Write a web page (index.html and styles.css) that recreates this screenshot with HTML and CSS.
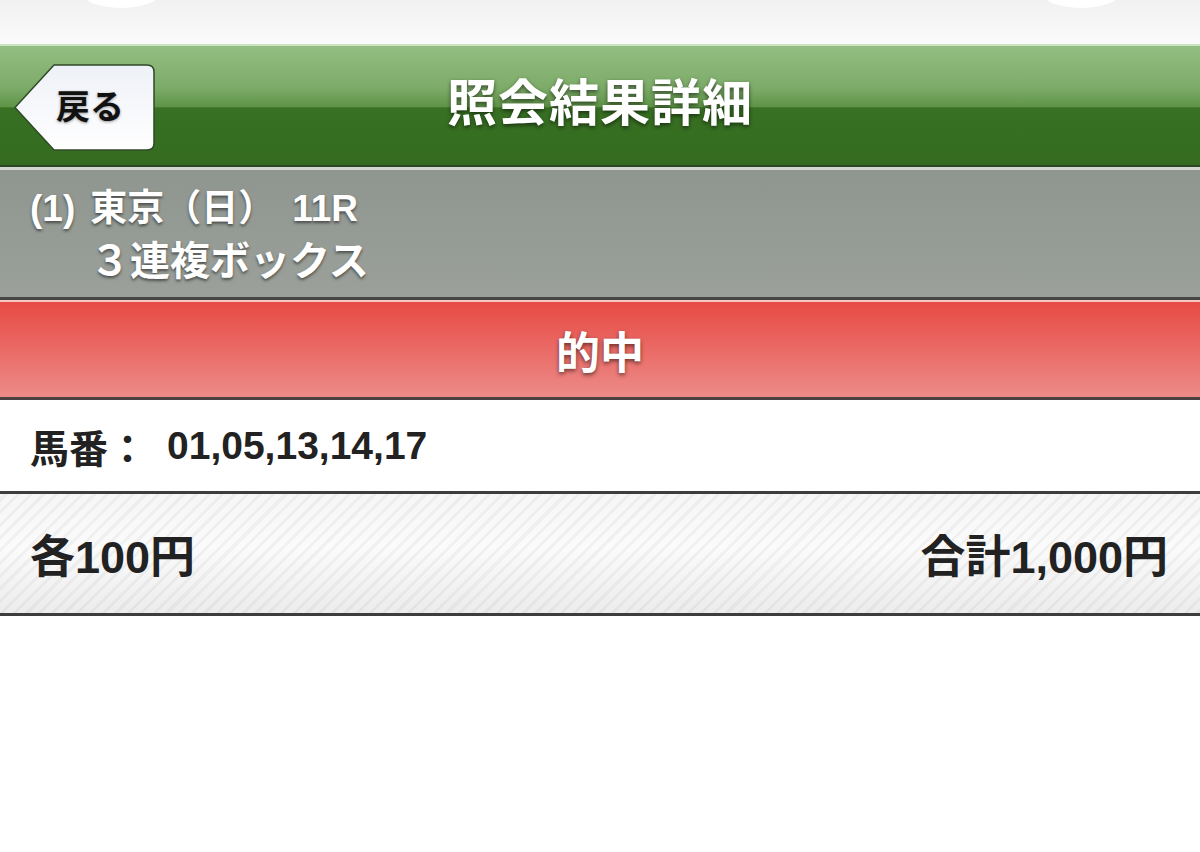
FILE: index.html
```html
<!DOCTYPE html>
<html lang="ja">
<head>
<meta charset="utf-8">
<title>照会結果詳細</title>
<link rel="stylesheet" href="styles.css">
</head>
<body>
<div class="page">
  <div class="statusbar">
    <span class="blob blob-left"></span>
    <span class="blob blob-right"></span>
  </div>
  <header class="navbar">
    <div class="nav-left">
      <a class="back" href="#">
        <svg class="back-shape" width="141" height="87" viewBox="0 0 141 87" aria-hidden="true">
          <defs>
            <linearGradient id="bg" x1="0" y1="0" x2="0" y2="1">
              <stop offset="0" stop-color="#eef1f7"/>
              <stop offset="0.5" stop-color="#f7f8fb"/>
              <stop offset="1" stop-color="#ffffff"/>
            </linearGradient>
          </defs>
          <path d="M40 1 H133 Q140 1 140 8 V79 Q140 86 133 86 H40 L1 43.5 Z" fill="url(#bg)" stroke="#2f4a27" stroke-width="1.5"/>
        </svg>
        <span class="back-label">戻る</span>
      </a>
    </div>
    <h1 class="title">照会結果詳細</h1>
    <div class="nav-right"></div>
  </header>
  <section class="race">
    <div class="race-line"><span>(1)</span><span class="venue">東京（日）</span><span class="rno">11R</span></div>
    <div class="race-line race-type">３連複ボックス</div>
  </section>
  <section class="result">的中</section>
  <section class="horses">
    <span class="horses-label">馬番：</span>
    <span class="horses-nums">01,05,13,14,17</span>
  </section>
  <section class="amounts">
    <span>各100円</span>
    <span>合計1,000円</span>
  </section>
</div>
</body>
</html>
```
FILE: styles.css
```css
* { box-sizing: border-box; }
html, body { margin: 0; padding: 0; background: #ffffff; }
body {
  font-family: "Liberation Sans", "Noto Sans CJK JP", sans-serif;
  font-weight: bold;
  width: 1200px;
  height: 852px;
  overflow: hidden;
}
.page { width: 1200px; }

.statusbar {
  position: relative;
  height: 44px;
  background: linear-gradient(#f1f1f1, #fbfbfb);
  overflow: hidden;
}
.blob {
  position: absolute;
  top: -22px;
  width: 78px;
  height: 30px;
  border-radius: 50%;
  background: #ffffff;
}
.blob-left { left: 82px; }
.blob-right { left: 1042px; }

.navbar {
  display: grid;
  grid-template-columns: 1fr auto 1fr;
  align-items: center;
  height: 123px;
  border-top: 2px solid #cbe4c0;
  border-bottom: 2px solid #2b4724;
  background: linear-gradient(#94be83 0%, #7dac69 35%, #5f9447 51%, #387123 52%, #346b20 100%);
}
.nav-left { padding-left: 14px; padding-top: 4px; }
.back {
  position: relative;
  display: block;
  width: 141px;
  height: 87px;
  text-decoration: none;
}
.back-shape { position: absolute; left: 0; top: 0; }
.back-label {
  position: absolute;
  left: 20px;
  top: 0;
  width: 112px;
  height: 80px;
  display: flex;
  align-items: center;
  justify-content: center;
  font-size: 34px;
  color: #111111;
  text-shadow: 0 1px 3px rgba(0,0,0,0.4);
}
.title {
  margin: 0;
  padding-bottom: 14px;
  font-size: 50px;
  font-weight: bold;
  color: #ffffff;
  letter-spacing: 1px;
  text-shadow: 0 2px 4px rgba(0,0,0,0.55);
}

.race {
  border-top: 3px solid #d3d6d2;
  border-bottom: 3px solid #454745;
  background: linear-gradient(#8f958f, #9ba09a);
  padding: 13px 0 10px 30px;
  color: #ffffff;
  font-size: 37px;
  text-shadow: 0 2px 3px rgba(0,0,0,0.5);
}
.race-line { line-height: 52px; height: 52px; white-space: nowrap; }
.venue { margin-left: 15px; }
.rno { margin-left: 17px; }
.race-type { padding-left: 60px; font-size: 40px; }

.result {
  height: 100px;
  border-top: 2px solid #f6c4c1;
  border-bottom: 3px solid #4a4240;
  background: linear-gradient(#e84a44, #ec8b88);
  display: flex;
  align-items: center;
  justify-content: center;
  color: #ffffff;
  font-size: 44px;
  text-shadow: 0 2px 4px rgba(0,0,0,0.55);
}

.horses {
  height: 94px;
  border-bottom: 3px solid #3d3d3d;
  display: flex;
  align-items: center;
  padding-left: 30px;
  font-size: 39px;
  color: #222222;
}
.horses-label { margin-right: 20px; }

.amounts {
  height: 122px;
  border-bottom: 3px solid #3d3d3d;
  display: flex;
  align-items: center;
  justify-content: space-between;
  padding: 0 32px 0 30px;
  font-size: 45px;
  color: #222222;
  background:
    repeating-linear-gradient(-45deg, rgba(0,0,0,0.04) 0 3px, rgba(255,255,255,0) 3px 9px),
    linear-gradient(#f6f6f6, #fbfbfb 45%, #ececec);
}
```
